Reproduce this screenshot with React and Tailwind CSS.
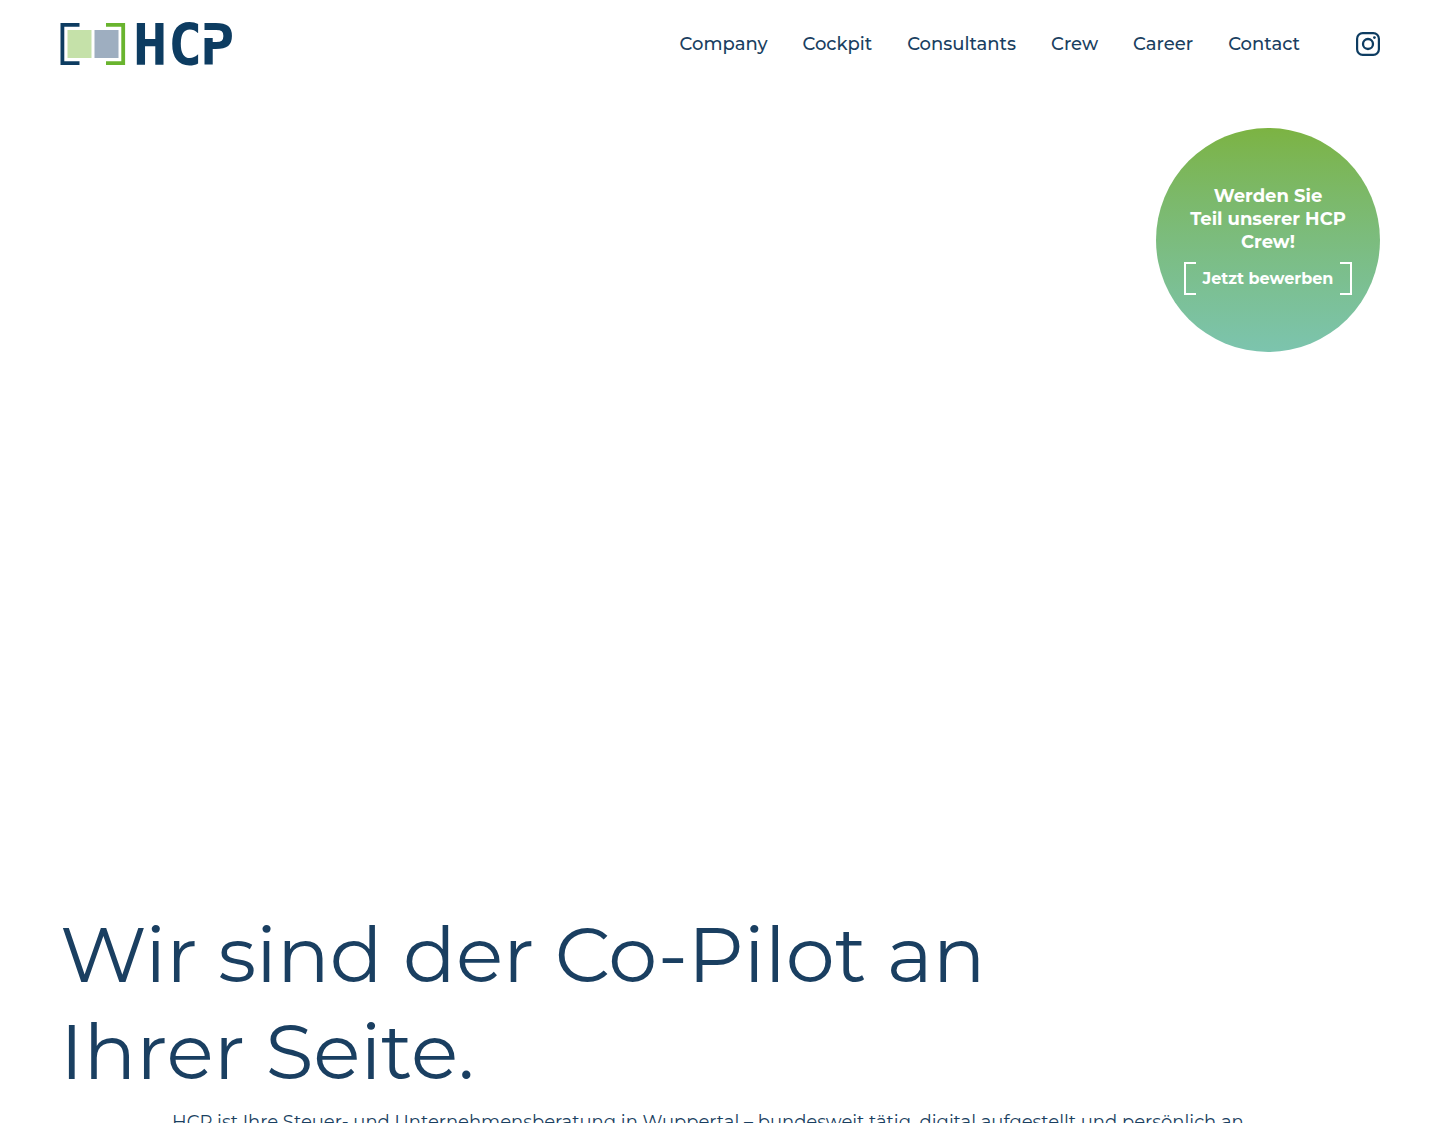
import React from 'react';

const navItems = ['Company', 'Cockpit', 'Consultants', 'Crew', 'Career', 'Contact'];

const Logo = () => (
  <svg viewBox="0 0 176 44" className="w-[176px] h-11 overflow-visible" role="img" aria-label="HCP">
    <rect x="7.5" y="8" width="24" height="28" fill="#c5e1a9" />
    <rect x="34.5" y="8" width="24" height="28" fill="#9eaec0" />
    <path d="M19.5 2.9H2.4V41.2H19.5" fill="none" stroke="#0d3c61" strokeWidth="3.8" />
    <path d="M46 2.9H63.2V41.2H46" fill="none" stroke="#69b42e" strokeWidth="3.8" />
    <text x="73 108 140" y="43" fill="#0d3c61" fontSize="57" fontWeight="700" fontFamily="'DejaVu Sans Mono', monospace">HCP</text>
    {/* stencil cut in the stem of the P */}
    <rect x="142" y="8" width="11" height="8" fill="#fff" />
  </svg>
);

const InstagramIcon = () => (
  <svg viewBox="0 0 24 24" className="w-6 h-6" fill="none" stroke="#0d3c61" aria-hidden="true">
    <rect x="1.1" y="1.1" width="21.8" height="21.8" rx="5.6" strokeWidth="2.2" />
    <circle cx="12" cy="12" r="5" strokeWidth="2.3" />
    <circle cx="18.4" cy="5.6" r="1.4" fill="#0d3c61" stroke="none" />
  </svg>
);

const Header = () => (
  <header className="flex items-center justify-between h-22 px-15">
    <a href="#home" aria-label="HCP Startseite">
      <Logo />
    </a>
    <div className="flex items-center gap-14">
      <nav className="flex items-center gap-[35px] text-lg font-medium">
        {navItems.map((item) => (
          <a key={item} href={`#${item.toLowerCase()}`}>{item}</a>
        ))}
      </nav>
      <a href="#instagram" aria-label="Instagram">
        <InstagramIcon />
      </a>
    </div>
  </header>
);

const ApplyBadge = () => (
  <a
    href="#bewerben"
    className="flex flex-col items-center justify-center gap-2 w-56 h-56 rounded-full bg-linear-to-b from-[#7cb342] to-[#7cc4ae] text-white text-center font-bold"
  >
    <span className="text-lg leading-[23px]">
      Werden Sie<br />Teil unserer HCP<br />Crew!
    </span>
    {/* bracket button */}
    <span className="flex items-stretch h-[33px]">
      <span className="w-3 border-2 border-r-0 border-white" />
      <span className="px-[7px] text-base leading-[33px]">Jetzt bewerben</span>
      <span className="w-3 border-2 border-l-0 border-white" />
    </span>
  </a>
);

const App = () => {
  return (
    <div className="min-h-screen bg-white text-[#1a3f61] font-['Montserrat','Inter',sans-serif]">
      <Header />

      {/* --- HERO --- */}
      <section className="flex justify-end items-start h-[818px] px-15 pt-10">
        <ApplyBadge />
      </section>

      {/* --- INTRO --- */}
      <main className="px-15">
        <h1 className="max-w-5xl text-[78px] leading-[97px] font-normal">
          Wir sind der Co-Pilot an Ihrer Seite.
        </h1>
        <p className="px-28 pt-2 text-lg">
          HCP ist Ihre Steuer- und Unternehmensberatung in Wuppertal – bundesweit tätig, digital aufgestellt und persönlich an
        </p>
      </main>
    </div>
  );
};

export default App;
